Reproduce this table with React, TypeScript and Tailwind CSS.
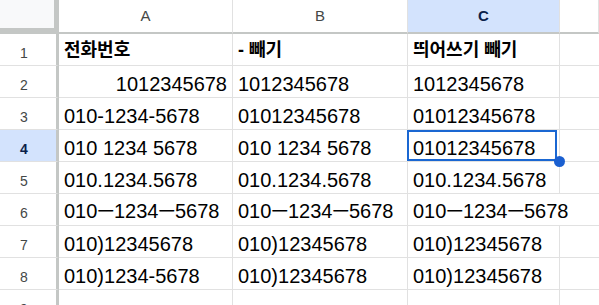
import React from "react";

type Cell = { text: string; align?: "right" };

const rows: Cell[][] = [
  [{ text: "전화번호" }, { text: "- 빼기" }, { text: "띄어쓰기 빼기" }],
  [{ text: "1012345678", align: "right" }, { text: "1012345678" }, { text: "1012345678" }],
  [{ text: "010-1234-5678" }, { text: "01012345678" }, { text: "01012345678" }],
  [{ text: "010 1234 5678" }, { text: "010 1234 5678" }, { text: "01012345678" }],
  [{ text: "010.1234.5678" }, { text: "010.1234.5678" }, { text: "010.1234.5678" }],
  [{ text: "010ㅡ1234ㅡ5678" }, { text: "010ㅡ1234ㅡ5678" }, { text: "010ㅡ1234ㅡ5678" }],
  [{ text: "010)12345678" }, { text: "010)12345678" }, { text: "010)12345678" }],
  [{ text: "010)1234-5678" }, { text: "010)12345678" }, { text: "010)12345678" }],
  [{ text: "" }, { text: "" }, { text: "" }],
];

const font = { fontFamily: '"Liberation Sans", "Noto Sans CJK KR", Arial, sans-serif' };

// the long dash is a hangul vowel, a bit narrower in the sheet
const renderText = (s: string) => {
  const parts = s.split("ㅡ");
  return parts.map((p, i) => (
    <React.Fragment key={i}>
      {p}
      {i < parts.length - 1 && <span className="text-[18px] font-medium">ㅡ</span>}
    </React.Fragment>
  ));
};

const App: React.FC = () => {
  return (
    <div className="w-[599px] h-[305px] overflow-hidden bg-white" style={font}>
      <div className="grid grid-cols-[59px_174px_175px_152px_1fr] grid-rows-[34px_repeat(9,32px)]">
        {/* header row */}
        <div className="bg-[#f8f9fa] border-r-[5px] border-b-[6px] border-[#c4c7c5]" />
        {["A", "B", "C", ""].map((col, i) => (
          <div
            key={i}
            className={`flex items-center justify-center border-r border-r-[#e1e1e1] border-b-2 border-b-[#c4c7c5] text-[15px] ${
              col === "C" ? "bg-[#d3e3fd] text-[#0b1f4a] font-bold" : "bg-white text-[#444746]"
            }`}
          >
            {col}
          </div>
        ))}

        {rows.map((row, r) => {
          const num = r + 1;
          const active = num === 4;
          return (
            <React.Fragment key={r}>
              <div
                className={`flex items-start justify-center pt-[9px] pr-[8px] border-r-[3px] border-r-[#c4c7c5] border-b border-b-[#e1e1e1] text-[14px] ${
                  active ? "bg-[#d3e3fd] text-[#0b1f4a] font-bold" : "bg-white text-[#444746]"
                }`}
              >
                {num}
              </div>
              {row.map((cell, c) => {
                const overflow = num === 6 && c === 2;
                const selected = num === 4 && c === 2;
                return (
                  <div
                    key={c}
                    className={`relative flex items-end px-[5px] pb-[1px] border-b border-b-[#e1e1e1] whitespace-pre text-black ${
                      overflow
                        ? "overflow-visible z-10"
                        : selected
                        ? "overflow-visible z-20 border-r border-r-[#e1e1e1]"
                        : "overflow-hidden border-r border-r-[#e1e1e1]"
                    } ${cell.align === "right" ? "justify-end" : "justify-start"} ${
                      num === 1 ? "text-[18px] font-bold leading-[24px] pb-[3px]" : "text-[20px] leading-[23px]"
                    }`}
                  >
                    <span>{renderText(cell.text)}</span>
                    {selected && (
                      <>
                        <div className="absolute left-[-1px] top-[0px] right-[2px] bottom-[0px] border-2 border-[#1a67d2] pointer-events-none" />
                        <div className="absolute right-[-6px] bottom-[-6px] w-[11px] h-[11px] rounded-full bg-[#1a5fd0]" />
                      </>
                    )}
                  </div>
                );
              })}
              <div className="border-b border-b-[#e1e1e1]" />
            </React.Fragment>
          );
        })}
      </div>
    </div>
  );
};

export default App;
